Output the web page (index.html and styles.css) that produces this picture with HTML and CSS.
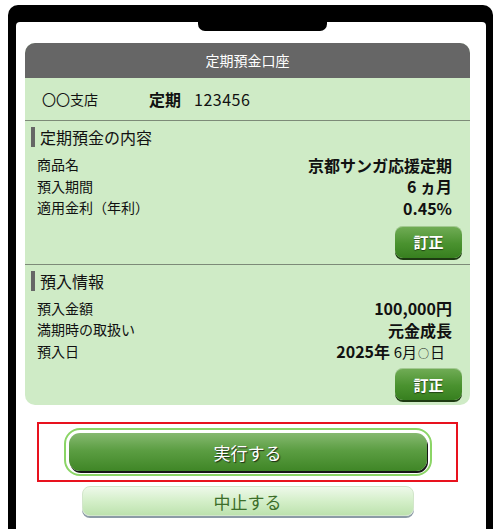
FILE: index.html
```html
<!DOCTYPE html>
<html lang="ja">
<head>
  <meta charset="UTF-8">
  <meta name="viewport" content="width=device-width, initial-scale=1.0">
  <title>定期預金口座</title>
  <link rel="stylesheet" href="styles.css">
</head>
<body>
  <div class="phone">
    <div class="screen">
      <div class="notch"></div>

      <div class="card">
        <div class="card-header">定期預金口座</div>
        <div class="account">
          <span class="branch">〇〇支店</span>
          <span class="kind">定期</span>
          <span class="number">123456</span>
        </div>

        <div class="section">
          <div class="sec-title">定期預金の内容</div>
          <div class="rows">
            <div class="row"><span>商品名</span><b>京都サンガ応援定期</b></div>
            <div class="row"><span>預入期間</span><b>6 ヵ月</b></div>
            <div class="row"><span>適用金利（年利）</span><b>0.45%</b></div>
          </div>
          <div class="btn-line first"><button class="btn-fix">訂正</button></div>
        </div>

        <div class="section last">
          <div class="sec-title">預入情報</div>
          <div class="rows">
            <div class="row"><span>預入金額</span><b>100,000円</b></div>
            <div class="row"><span>満期時の取扱い</span><b>元金成長</b></div>
            <div class="row"><span>預入日</span><b class="date">2025年 <span>6月<i>○</i>日</span></b></div>
          </div>
          <div class="btn-line"><button class="btn-fix">訂正</button></div>
        </div>
      </div>

      <div class="actions">
        <div class="highlight">
          <div class="ring"><button class="btn-run">実行する</button></div>
        </div>
        <button class="btn-cancel">中止する</button>
      </div>
    </div>
  </div>
</body>
</html>
```

FILE: styles.css
```css
html, body {
  margin: 0;
  padding: 0;
  height: 100%;
  background: #fff;
  font-family: "Noto Sans CJK JP", "Noto Sans", sans-serif;
  color: #111;
}

.phone {
  box-sizing: border-box;
  height: calc(100% - 5px);
  margin: 5px 7px 0 8px;
  padding: 17px 7px 0 8px;
  background: #000;
  border-radius: 10px 10px 0 0;
}

.screen {
  box-sizing: border-box;
  height: 100%;
  padding: 0 16px 0 9px;
  background: #fff;
  border-radius: 4px 4px 0 0;
}

.notch {
  width: 129px;
  height: 9px;
  margin-left: 173px;
  background: #000;
  border-radius: 0 0 7px 7px;
}

.card {
  margin-top: 12px;
  background: #cfebc6;
  border-radius: 10px;
  overflow: hidden;
}

.card-header {
  height: 35px;
  line-height: 35px;
  text-align: center;
  background: #666;
  color: #fff;
  font-size: 14px;
}

.account {
  display: flex;
  align-items: center;
  height: 42px;
  padding-left: 17px;
  border-bottom: 1px solid #7d8a78;
  font-size: 14px;
}

.account .kind {
  margin-left: 51px;
  font-size: 16px;
  font-weight: bold;
}

.account .number {
  margin-left: 13px;
  font-size: 16px;
  letter-spacing: 0.5px;
}

.section {
  padding: 6px 8px 6px 6px;
  border-bottom: 1px solid #7d8a78;
}

.section.last {
  border-bottom: none;
  padding-bottom: 5px;
}

.sec-title {
  border-left: 4px solid #666;
  padding-left: 5px;
  line-height: 20px;
  font-size: 16px;
}

.rows {
  margin: 7px 10px 0 6px;
}

.row {
  display: flex;
  justify-content: space-between;
  align-items: center;
  height: 21.5px;
  line-height: 21.5px;
  font-size: 14px;
}

.row b {
  font-size: 16px;
  line-height: 1;
}

.row .date span {
  font-weight: normal;
  font-size: 15px;
  margin-right: 7px;
}

.row .date i {
  font-style: normal;
  font-size: 11px;
  margin: 0 1px;
}

.btn-line {
  display: flex;
  justify-content: flex-end;
  margin-top: 6px;
}

.btn-line.first {
  margin-top: 7px;
}

.btn-fix {
  width: 67px;
  height: 32px;
  border: none;
  border-radius: 8px;
  background: linear-gradient(#72ad57, #4a922f 55%, #377f1f);
  box-shadow: 0 2px 0 #1d3a12, inset 0 1px 0 rgba(255, 255, 255, 0.35);
  color: #fff;
  font-family: inherit;
  font-size: 15px;
  font-weight: bold;
  text-shadow: 0 1px 1px rgba(0, 0, 0, 0.5);
  cursor: pointer;
}

.actions {
  display: flex;
  flex-direction: column;
  align-items: center;
  margin-top: 17px;
}

.highlight {
  box-sizing: border-box;
  width: 421px;
  height: 60px;
  padding: 4px 0 0;
  border: 2px solid #e8121e;
  display: flex;
  justify-content: center;
}

.ring {
  box-sizing: border-box;
  width: 368px;
  height: 48px;
  padding: 3px;
  border: 2px solid #8bd566;
  border-radius: 16px;
  background: #fff;
}

.btn-run {
  width: 100%;
  height: 38px;
  border: none;
  border-radius: 11px;
  background: linear-gradient(#86b970, #5c9e43 45%, #3f8626);
  box-shadow: 1px 2px 0 #161616;
  color: #fff;
  font-family: inherit;
  font-size: 17px;
  text-shadow: 1px 1px 1px #1c2c14;
  cursor: pointer;
}

.btn-cancel {
  width: 332px;
  height: 30px;
  margin-top: 4px;
  border: 1px solid #d2e6ca;
  border-radius: 8px;
  background: linear-gradient(#eef9ea, #d4efc9 50%, #bde2ae);
  box-shadow: 0 2px 0 #8c9ba6;
  color: #3c6e2a;
  font-family: inherit;
  font-size: 17px;
  cursor: pointer;
}
```
